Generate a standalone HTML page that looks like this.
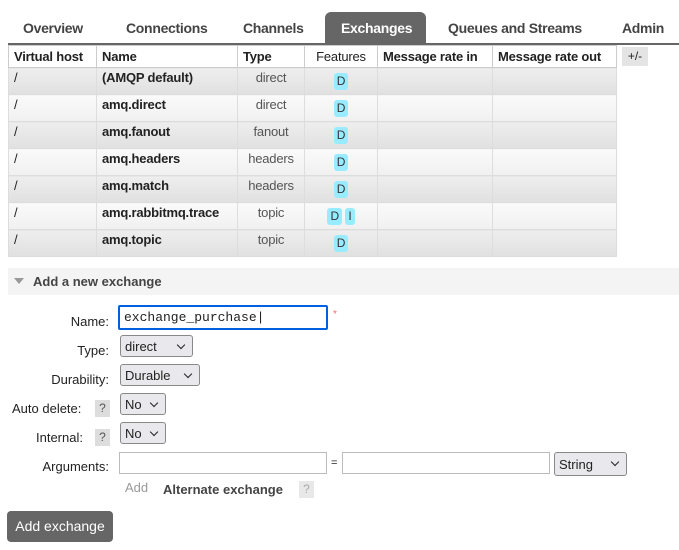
<html><head><style>
body{margin:0;width:679px;height:550px;background:#fff;font-family:"Liberation Sans",sans-serif;font-size:13px;color:#222;position:relative;overflow:hidden}
.a{position:absolute}
.tab{position:absolute;top:14px;height:30px;line-height:29px;font-weight:bold;color:#444;font-size:14px;letter-spacing:-0.3px}
table{position:absolute;left:8px;top:45px;border-collapse:collapse;width:609px}
td,th{border:1px solid #ddd;height:26px;box-sizing:border-box;padding:0 5px;font-size:13px;letter-spacing:-0.2px;vertical-align:top;line-height:20px}
tr td{height:27px}
th{text-align:left;height:22px;line-height:21px;background:#fff;border-color:#ccc}
tr.g td{background:linear-gradient(#eee,#e0e0e0)}
tr.l td{background:linear-gradient(#fafafa,#f0f0f0)}
.b{font-weight:bold}
.c{text-align:center;color:#555}
.d{display:inline-block;background:#99ebff;border-radius:3px;padding:0 3px;line-height:17px;margin-top:5px;color:#333;font-size:12px}
.lab{position:absolute;right:570px;text-align:right;font-size:13px}
.sel{position:absolute;border:1px solid #888;border-radius:3px;background:#e9e9ed;height:22px;line-height:21px;padding-left:4px;box-sizing:border-box;font-size:13px}
.sel:after{content:"";position:absolute;right:8px;top:6px;width:5px;height:5px;border-right:1.5px solid #222;border-bottom:1.5px solid #222;transform:rotate(45deg)}
.q{position:absolute;background:#ddd;width:15px;height:17px;line-height:17px;text-align:center;font-size:12px;color:#555}
.in{position:absolute;border:1px solid #bbb;height:22px;box-sizing:border-box}
</style></head><body>
<div class="tab" style="left:23px">Overview</div>
<div class="tab" style="left:126px">Connections</div>
<div class="tab" style="left:243px">Channels</div>
<div class="a" style="left:325px;top:12px;width:101px;height:32px;background:#666;border-radius:6px 6px 0 0"></div>
<div class="tab" style="left:341px;color:#fff">Exchanges</div>
<div class="tab" style="left:448px">Queues and Streams</div>
<div class="tab" style="left:622px">Admin</div>
<div class="a" style="left:8px;top:43px;width:671px;height:2px;background:#666"></div>
<table>
<tr><th style="width:88px">Virtual host</th><th style="width:141px">Name</th><th style="width:67px">Type</th><th style="width:73px;font-weight:normal;text-align:center">Features</th><th style="width:115px">Message rate in</th><th>Message rate out</th></tr>
<tr class="g"><td>/</td><td class="b">(AMQP default)</td><td class="c">direct</td><td style="text-align:center"><span class="d">D</span></td><td></td><td></td></tr>
<tr class="l"><td>/</td><td class="b">amq.direct</td><td class="c">direct</td><td style="text-align:center"><span class="d">D</span></td><td></td><td></td></tr>
<tr class="g"><td>/</td><td class="b">amq.fanout</td><td class="c">fanout</td><td style="text-align:center"><span class="d">D</span></td><td></td><td></td></tr>
<tr class="l"><td>/</td><td class="b">amq.headers</td><td class="c">headers</td><td style="text-align:center"><span class="d">D</span></td><td></td><td></td></tr>
<tr class="g"><td>/</td><td class="b">amq.match</td><td class="c">headers</td><td style="text-align:center"><span class="d">D</span></td><td></td><td></td></tr>
<tr class="l"><td>/</td><td class="b">amq.rabbitmq.trace</td><td class="c">topic</td><td style="text-align:center"><span class="d">D</span> <span class="d">I</span></td><td></td><td></td></tr>
<tr class="g"><td>/</td><td class="b">amq.topic</td><td class="c">topic</td><td style="text-align:center"><span class="d">D</span></td><td></td><td></td></tr>
</table>
<div class="a" style="left:622px;top:47px;width:26px;height:19px;background:#e4e4e4;text-align:center;line-height:19px;font-size:12px">+/-</div>
<div class="a" style="left:8px;top:268px;width:671px;height:27px;background:#f4f4f4"></div>
<div class="a" style="left:14px;top:278px;width:0;height:0;border-left:5px solid transparent;border-right:5px solid transparent;border-top:6px solid #999"></div>
<div class="a b" style="left:33px;top:274px;font-size:13px;color:#444">Add a new exchange</div>
<div class="lab" style="top:314px">Name:</div>
<div class="a" style="left:118px;top:305px;width:210px;height:25px;border:2px solid #0060df;border-radius:2px;box-sizing:border-box;font-family:'Liberation Mono',monospace;font-size:13px;line-height:21px;padding-left:4px">exchange_purchase|</div>
<div class="a" style="left:333px;top:309px;color:#f66;font-size:10px">*</div>
<div class="lab" style="top:343px">Type:</div>
<div class="sel" style="left:120px;top:335px;width:73px">direct</div>
<div class="lab" style="top:372px">Durability:</div>
<div class="sel" style="left:120px;top:364px;width:80px">Durable</div>
<div class="a" style="left:12px;top:401px">Auto delete:</div>
<div class="q" style="left:95px;top:400px">?</div>
<div class="sel" style="left:120px;top:393px;width:46px">No</div>
<div class="a" style="left:36px;top:430px">Internal:</div>
<div class="q" style="left:95px;top:429px">?</div>
<div class="sel" style="left:120px;top:422px;width:46px">No</div>
<div class="lab" style="top:459px">Arguments:</div>
<div class="in" style="left:119px;top:452px;width:208px"></div>
<div class="a" style="left:331px;top:457px;font-size:11px">=</div>
<div class="in" style="left:342px;top:452px;width:208px"></div>
<div class="sel" style="left:554px;top:452px;width:73px;height:24px;line-height:23px">String</div>
<div class="a" style="left:125px;top:480px;color:#999">Add</div>
<div class="a b" style="left:163px;top:482px;color:#444">Alternate exchange</div>
<div class="q" style="left:299px;top:481px;background:#e8e8e8;color:#aaa">?</div>
<div class="a" style="left:7px;top:511px;width:106px;height:31px;background:#666;border-radius:4px;color:#fff;text-align:center;line-height:30px;font-size:14px">Add exchange</div>
</body></html>
